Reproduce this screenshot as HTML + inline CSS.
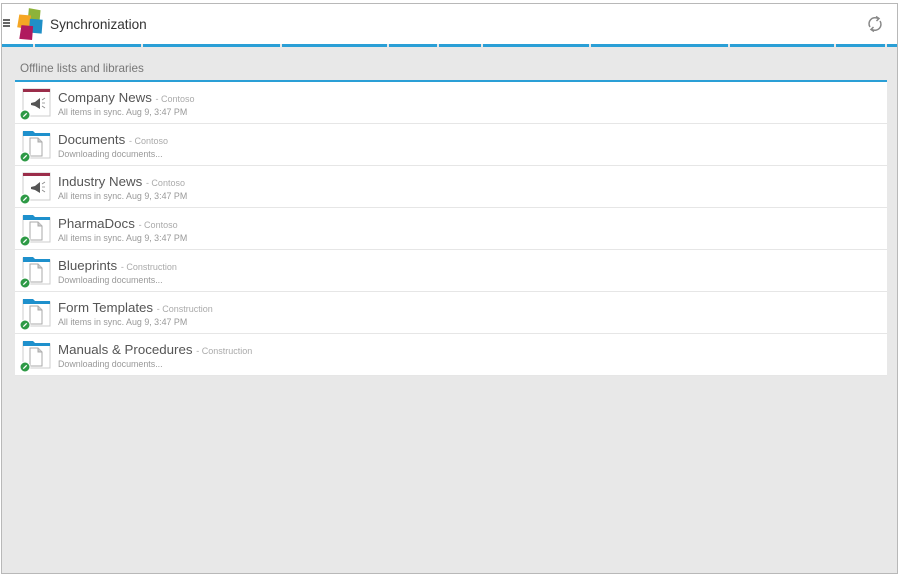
<!DOCTYPE html>
<html><head><style>
body{margin:0;width:900px;height:574px;background:#fff;font-family:"Liberation Sans",sans-serif;position:relative;overflow:hidden}
.frame{position:absolute;left:1px;top:3px;width:895px;height:569px;border:1px solid #b8b8b8;background:#e8e8e8}
.hdr{position:absolute;left:0;top:0;width:895px;height:40px;background:#fff}
.bl{position:absolute;top:40px;height:3px;background:#2a9fd6}
.title{position:absolute;left:48px;top:13px;font-size:13.6px;color:#333}
.sec{position:absolute;left:18px;top:58px;font-size:11.7px;color:#777}
.secline{position:absolute;left:13px;top:76px;width:872px;height:2px;background:#2a9fd6}
.row{position:absolute;left:15px;width:872px;height:41px;background:#fff;border-bottom:1px solid #e6e6e6}
.n{position:absolute;left:43px;top:8px;font-size:13.3px;color:#555}
.n span{font-size:9px;color:#aaa}
.s{position:absolute;left:43px;top:25px;font-size:8.9px;color:#999}
.ic{position:absolute;left:5px;top:5px}
</style></head><body>
<div class="frame">
<div class="hdr">
<div style="position:absolute;left:1px;top:15px;width:7px;height:1.5px;background:#666;box-shadow:0 3px 0 #666,0 6px 0 #666"></div>
<svg style="position:absolute;left:14px;top:3px" width="30" height="34" viewBox="0 0 28 32">
<polygon points="12,1 23,3 22,14 11,12" fill="#8db33a"/>
<polygon points="3,7 14,8 13,21 1,19" fill="#f5a623"/>
<polygon points="13,11 25,12 24,25 12,24" fill="#1f8fc7"/>
<polygon points="5,17 16,18 15,31 3,30" fill="#b0195e"/>
</svg>
<div class="title">Synchronization</div>
<svg style="position:absolute;left:864px;top:11px" width="18" height="18" viewBox="0 0 18 18" fill="none" stroke="#888" stroke-width="1.5"><path d="M4 12A6 6 0 0 1 12 3.5"/><path d="M10 1.5l3 2-2.5 2.5" /><path d="M14 6A6 6 0 0 1 6 14.5"/><path d="M8 16.5l-3-2 2.5-2.5"/></svg>
</div>
<div class="bl" style="left:0;width:31px"></div>
<div class="bl" style="left:33px;width:106px"></div>
<div class="bl" style="left:141px;width:137px"></div>
<div class="bl" style="left:280px;width:105px"></div>
<div class="bl" style="left:387px;width:48px"></div>
<div class="bl" style="left:437px;width:42px"></div>
<div class="bl" style="left:481px;width:106px"></div>
<div class="bl" style="left:589px;width:137px"></div>
<div class="bl" style="left:728px;width:104px"></div>
<div class="bl" style="left:834px;width:49px"></div>
<div class="bl" style="left:885px;width:10px"></div>
<div class="sec">Offline lists and libraries</div>
<div class="secline"></div>
</div>
<div id="rows"></div>
<script>
var d=[["Company News","Contoso",0,"All items in sync. Aug 9, 3:47 PM"],["Documents","Contoso",1,"Downloading documents..."],["Industry News","Contoso",0,"All items in sync. Aug 9, 3:47 PM"],["PharmaDocs","Contoso",1,"All items in sync. Aug 9, 3:47 PM"],["Blueprints","Construction",1,"Downloading documents..."],["Form Templates","Construction",1,"All items in sync. Aug 9, 3:47 PM"],["Manuals &amp; Procedures","Construction",1,"Downloading documents..."]];
var news='<rect x="3" y="2" width="27" height="27" fill="#fff" stroke="#ccc"/><rect x="3" y="2" width="27" height="3" fill="#9b2d4a"/><path d="M11 16l4-1 5-4v11l-5-3-4-1z" fill="#555"/><path d="M22 13l3-2M22 16h3M22 19l3 2" stroke="#888" stroke-width="0.8"/>';
var fold='<path d="M3 3h10l2 2h15v24H3z" fill="#fff" stroke="#ccc"/><path d="M3 2h10l2 2h15v3H3z" fill="#1e90cc"/><path d="M10 9h8l4 4v14H10z" fill="#fff" stroke="#aaa"/><path d="M18 9v4h4" fill="#ccc" stroke="#aaa"/>';
var h='';
d.forEach(function(r,i){h+='<div class="row" style="top:'+(82+42*i)+'px"><svg class="ic" width="32" height="34" viewBox="0 0 32 34">'+(r[2]?fold:news)+'<circle cx="5" cy="28" r="5" fill="#2e9a46" stroke="#fff"/><path d="M3.3 29.7l3.4-3.4" stroke="#fff" stroke-width="1.3"/></svg><div class="n">'+r[0]+' <span>- '+r[1]+'</span></div><div class="s">'+r[3]+'</div></div>';});
document.getElementById('rows').innerHTML=h;
</script>
</body></html>
